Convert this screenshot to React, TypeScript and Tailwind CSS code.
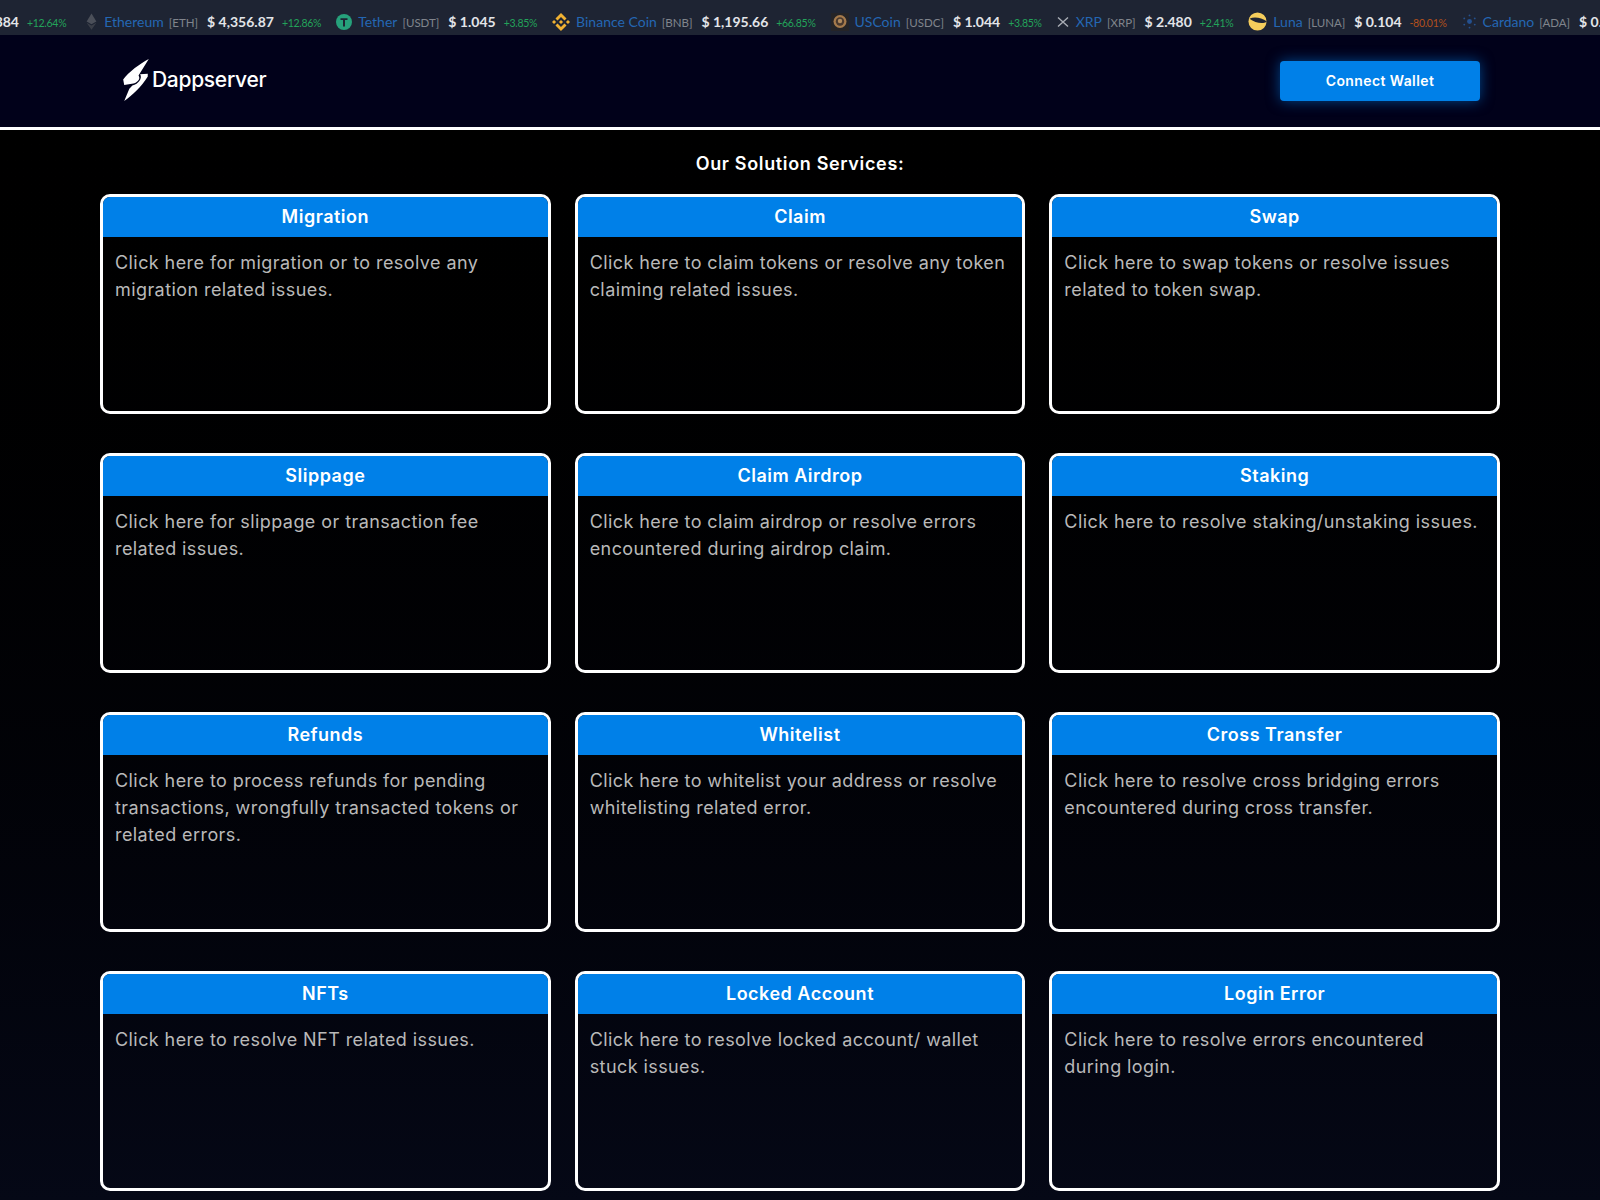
const coins = [
  { icon: "eth", name: "Ethereum", sym: "ETH", price: "$ 4,356.87", pct: "+12.86%", up: true },
  { icon: "usdt", name: "Tether", sym: "USDT", price: "$ 1.045", pct: "+3.85%", up: true },
  { icon: "bnb", name: "Binance Coin", sym: "BNB", price: "$ 1,195.66", pct: "+66.85%", up: true },
  { icon: "usdc", name: "USCoin", sym: "USDC", price: "$ 1.044", pct: "+3.85%", up: true },
  { icon: "xrp", name: "XRP", sym: "XRP", price: "$ 2.480", pct: "+2.41%", up: true },
  { icon: "luna", name: "Luna", sym: "LUNA", price: "$ 0.104", pct: "-80.01%", up: false },
  { icon: "ada", name: "Cardano", sym: "ADA", price: "$ 0.914", pct: "", up: true },
];

const services = [
  { title: "Migration", text: "Click here for migration or to resolve any migration related issues." },
  { title: "Claim", text: "Click here to claim tokens or resolve any token claiming related issues." },
  { title: "Swap", text: "Click here to swap tokens or resolve issues related to token swap." },
  { title: "Slippage", text: "Click here for slippage or transaction fee related issues." },
  { title: "Claim Airdrop", text: "Click here to claim airdrop or resolve errors encountered during airdrop claim." },
  { title: "Staking", text: "Click here to resolve staking/unstaking issues." },
  { title: "Refunds", text: "Click here to process refunds for pending transactions, wrongfully transacted tokens or related errors." },
  { title: "Whitelist", text: "Click here to whitelist your address or resolve whitelisting related error." },
  { title: "Cross Transfer", text: "Click here to resolve cross bridging errors encountered during cross transfer." },
  { title: "NFTs", text: "Click here to resolve NFT related issues." },
  { title: "Locked Account", text: "Click here to resolve locked account/ wallet stuck issues." },
  { title: "Login Error", text: "Click here to resolve errors encountered during login." },
];

function CoinIcon({ name }: { name: string }) {
  if (name === "eth")
    return (
      <svg viewBox="0 0 16 20" className="w-[13px] h-[19px]">
        <path d="M8 0 L14 10 L8 13.5 L2 10 Z" fill="#4b4f59" />
        <path d="M2 11.5 L8 15 L14 11.5 L8 20 Z" fill="#3a3e48" />
      </svg>
    );
  if (name === "usdt")
    return (
      <svg viewBox="0 0 16 16" className="w-4 h-4">
        <circle cx="8" cy="8" r="8" fill="#26a17b" />
        <path d="M4.5 4.2h7v1.8H9v6.5H7V6H4.5z" fill="#1e2433" />
      </svg>
    );
  if (name === "bnb")
    return (
      <svg viewBox="0 0 32 32" className="w-[18px] h-[18px]" fill="#f0b132">
        <path d="M9.79 13.44L16 7.23l6.21 6.22 3.61-3.61L16 0 6.18 9.83zM0 16l3.61-3.61L7.22 16l-3.61 3.61zm9.79 2.56L16 24.77l6.21-6.22 3.61 3.61L16 32l-9.82-9.83zM24.78 16l3.61-3.61L32 16l-3.61 3.61zM19.66 16L16 12.34 12.34 16 16 19.66z" />
      </svg>
    );
  if (name === "usdc")
    return (
      <svg viewBox="0 0 18 18" className="w-[18px] h-[18px]">
        <rect width="18" height="18" fill="#252427" />
        <circle cx="9" cy="8.5" r="6.5" fill="#a57a4c" />
        <circle cx="9" cy="8.5" r="4.2" fill="#4a392e" />
        <circle cx="9" cy="8" r="2.2" fill="#b08a5e" />
      </svg>
    );
  if (name === "xrp")
    return (
      <svg viewBox="0 0 12 12" className="w-[12px] h-[12px] mr-[1px]" stroke="#a9adb5" strokeWidth="1.4" fill="none">
        <path d="M1 1.5 L11 10.5 M11 1.5 L1 10.5" />
      </svg>
    );
  if (name === "luna")
    return (
      <svg viewBox="0 0 20 20" className="w-[19px] h-[19px]">
        <circle cx="10" cy="10" r="9.5" fill="#f5cd5c" />
        <path d="M1.5 7 C7 4.5 14 6 20 10 C15 13.5 7.5 11 1.5 7Z" fill="#1e2433" />
      </svg>
    );
  return (
    <svg viewBox="0 0 16 16" className="w-[15px] h-[15px]" fill="#24508f">
      <circle cx="8" cy="8" r="2.6" />
      <circle cx="8" cy="1.5" r="1" />
      <circle cx="8" cy="14.5" r="1" />
      <circle cx="2.4" cy="4.7" r="1" />
      <circle cx="13.6" cy="4.7" r="1" />
      <circle cx="2.4" cy="11.3" r="1" />
      <circle cx="13.6" cy="11.3" r="1" />
    </svg>
  );
}

function Ticker() {
  return (
    <div className="h-[35px] bg-[#1e2433] overflow-hidden flex items-center whitespace-nowrap font-['Lato','Liberation_Sans',sans-serif] pt-[8px]">
      <div className="flex items-center gap-[15px] ml-[-8px]">
        <div className="flex items-baseline gap-[8px] mr-[4px]">
          <span className="w-[27px] overflow-hidden text-[14px] font-bold text-[#e3e5e9] flex justify-end">384</span>
          <span className="text-[10.5px] text-[#23a35a] tracking-[-0.3px]">+12.64%</span>
        </div>
        {coins.map((c) => (
          <div key={c.name} className="flex items-center gap-[6px] shrink-0">
            <CoinIcon name={c.icon} />
            <div className="flex items-baseline">
              <span className="text-[14px] text-[#2467b3]">{c.name}</span>
              <span className="text-[11.5px] text-[#80848c] ml-[5px]">[{c.sym}]</span>
              <span className="text-[14px] font-bold text-[#e3e5e9] ml-[9px]">{c.price}</span>
              <span className={c.up ? "text-[10.5px] text-[#23a35a] tracking-[-0.3px] ml-[8px]" : "text-[10.5px] text-[#b3501c] tracking-[-0.3px] ml-[8px]"}>{c.pct}</span>
            </div>
          </div>
        ))}
      </div>
    </div>
  );
}

function Navbar() {
  return (
    <div className="h-[95px] bg-[#01011a] border-b-[3px] border-white flex items-center justify-between pl-[123px] pr-[120px]">
      <div className="flex items-center gap-[2px] text-white">
        <svg viewBox="0 0 26 42" className="w-[27px] h-[43px] mb-[2px]" fill="#ffffff">
          <path d="M25 0 C17 4 5 13 0 20 L1 25.5 L10 24 C15 22 17 19 15 16 Z" />
          <path d="M24 14.5 L16.5 15 C19 19 15 24.5 9 26 L6 29 L1 41 C8 36 18 27 24 17 Z" />
        </svg>
        <span className="text-[21px] font-medium font-['Inter',sans-serif] tracking-[-0.3px] mb-[2px]">Dappserver</span>
      </div>
      <button className="w-[200px] h-[40px] pb-[2px] rounded-[4px] bg-[#0080e8] text-white text-[14px] tracking-[0.4px] font-semibold font-['Inter',sans-serif] shadow-[0_0_14px_rgba(0,128,232,0.55)]">
        Connect Wallet
      </button>
    </div>
  );
}

function ServiceCard({ title, text }: { title: string; text: string }) {
  return (
    <div className="h-[220px] rounded-[10px] border-[3px] border-white overflow-hidden">
      <div className="h-[40px] bg-[#0080e8] flex items-center justify-center text-white text-[18px] font-semibold tracking-[0.5px] pb-[2px]">
        {title}
      </div>
      <p className="px-3 pt-3 text-[18px] leading-[27px] text-[#b9b9b9] tracking-[0.42px]">{text}</p>
    </div>
  );
}

export default function App() {
  return (
    <div className="min-h-[1200px] bg-gradient-to-b from-black to-[#050816] font-['Inter',sans-serif]">
      <Ticker />
      <Navbar />
      <div className="px-[100px] pt-[20px] pb-[8px]">
        <h2 className="text-center text-white text-[18px] font-semibold leading-[27px] mb-[17px] tracking-[0.65px]">Our Solution Services:</h2>
        <div className="grid grid-cols-3 gap-x-6 gap-y-[39px]">
          {services.map((s) => (
            <ServiceCard key={s.title} title={s.title} text={s.text} />
          ))}
        </div>
      </div>
    </div>
  );
}
